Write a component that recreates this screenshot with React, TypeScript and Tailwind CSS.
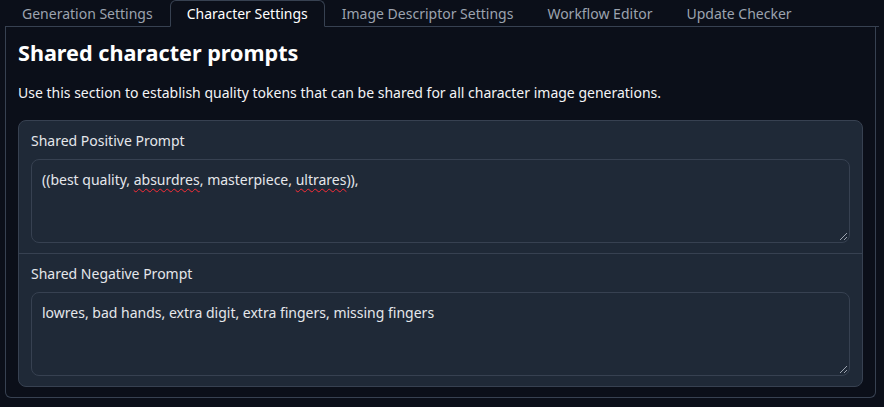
import React from "react";

const tabs = [
  "Generation Settings",
  "Character Settings",
  "Image Descriptor Settings",
  "Workflow Editor",
  "Update Checker",
];

function Grip() {
  return (
    <svg
      className="absolute right-[1px] bottom-[1px]"
      width="10"
      height="10"
      viewBox="0 0 10 10"
    >
      <line x1="9" y1="2" x2="2" y2="9" stroke="#9ca3af" strokeWidth="1" />
      <line x1="9" y1="6" x2="6" y2="9" stroke="#9ca3af" strokeWidth="1" />
    </svg>
  );
}

function Field({
  label,
  children,
  divider,
}: {
  label: string;
  children: React.ReactNode;
  divider?: boolean;
}) {
  return (
    <div
      className={`px-[12px] py-[10px] flex flex-col gap-[8px] ${
        divider ? "border-t border-[#374151]" : ""
      }`}
    >
      <div className="text-[14px] leading-[20px] text-[#e5e7eb]">{label}</div>
      <div className="relative h-[84px] rounded-[8px] border border-[#374151] bg-[#1f2937] px-[10px] py-[10px] text-[14px] leading-[20px] text-[#e5e7eb]">
        {children}
        <Grip />
      </div>
    </div>
  );
}

export default function App() {
  return (
    <div className="min-h-screen bg-[#0b0f19] px-[5px] font-['Noto_Sans',sans-serif]">
      <div className="flex border-b border-[#374151]">
        {tabs.map((t, i) => (
          <div
            key={t}
            className={`-mb-px h-[27px] flex items-center px-[16px] border rounded-t-[6px] text-[14px] ${
              i === 1
                ? "border-[#374151] border-b-[#0b0f19] text-white"
                : "border-transparent text-[#9ca3af]"
            }`}
          >
            {t}
          </div>
        ))}
      </div>
      <div className="border border-t-0 border-[#374151] rounded-b-[6px] px-[12px] pt-[11px] pb-[10px] mr-[3px]">
        <h2 className="text-[21.6px] leading-[29px] font-bold text-white">
          Shared character prompts
        </h2>
        <p className="mt-[16px] text-[14px] leading-[20px] text-[#f3f4f6]">
          Use this section to establish quality tokens that can be shared for
          all character image generations.
        </p>
        <div className="mt-[17px] rounded-[8px] border border-[#374151] bg-[#1f2937]">
          <Field label="Shared Positive Prompt">
            ((best quality,{" "}
            <span className="underline decoration-wavy decoration-red-500 decoration-1 underline-offset-[3px]">
              absurdres
            </span>
            , masterpiece,{" "}
            <span className="underline decoration-wavy decoration-red-500 decoration-1 underline-offset-[3px]">
              ultrares
            </span>
            )),
          </Field>
          <Field label="Shared Negative Prompt" divider>
            lowres, bad hands, extra digit, extra fingers, missing fingers
          </Field>
        </div>
      </div>
    </div>
  );
}
